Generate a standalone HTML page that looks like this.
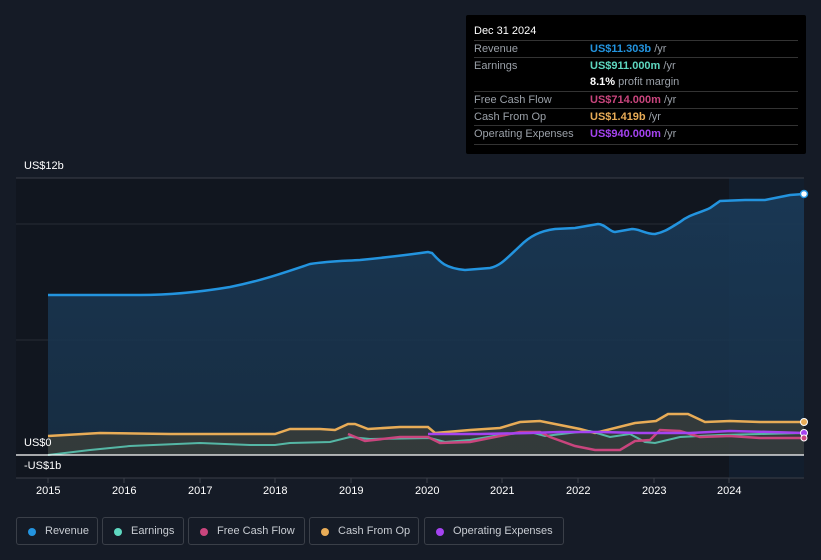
<!DOCTYPE html>
<html><head><meta charset="utf-8"><style>
body{margin:0;width:821px;height:560px;background:#151b26;font-family:"Liberation Sans",sans-serif;overflow:hidden;position:relative}
.tt{position:absolute;left:466px;top:15px;width:340px;height:139px;background:#000;border-radius:2px;font-size:11px;color:#9aa0a8}
.tt .h{position:absolute;left:8px;top:10px;color:#fff;font-size:11px}
.row{position:absolute;left:8px;width:324px;border-top:1px solid #333;height:17px;line-height:17px}
.row span.l{position:absolute;left:0}
.row span.v{position:absolute;left:116px}
.row b{font-weight:bold}
.leg{position:absolute;top:517px;height:28px;border:1px solid #3a3f48;border-radius:3px;color:#c8ccd2;font-size:11px;line-height:27px;box-sizing:border-box;padding-left:28px}
.leg i{position:absolute;left:11px;top:10px;width:8px;height:8px;border-radius:50%}
.ax{position:absolute;color:#fff;font-size:11px}
</style></head><body>
<svg width="821" height="560" style="position:absolute;left:0;top:0">
<defs><linearGradient id="rg" x1="0" y1="0" x2="0" y2="1"><stop offset="0" stop-color="#1a3a58" stop-opacity=".9"/><stop offset="1" stop-color="#18324a" stop-opacity=".8"/></linearGradient></defs>
<rect x="16" y="178" width="788" height="300" fill="#11161f"/>
<rect x="729" y="178" width="75" height="300" fill="#13283d" opacity=".45"/>
<line x1="16" y1="178" x2="804" y2="178" stroke="#3a3f48"/>
<line x1="16" y1="224" x2="804" y2="224" stroke="#262c36"/>
<line x1="16" y1="340" x2="804" y2="340" stroke="#262c36"/>
<path d="M48,295 L140,295 C170,295 200,292 230,287 C260,281 280,274 310,264 C330,261 345,261 360,260 C380,258 400,256 428,252 L432,253 C440,262 445,268 465,270 L490,268 C500,266 505,260 520,246 C530,236 540,231 555,229 L575,228 L598,224 C605,224 610,232 615,232 L632,229 C640,229 645,234 655,234 C665,232 670,228 680,222 C690,214 700,213 710,208 L720,201 L745,200 L765,200 L790,195 L804,194 L804,455 L48,455 Z" fill="url(#rg)"/>
<path d="M48,295 L140,295 C170,295 200,292 230,287 C260,281 280,274 310,264 C330,261 345,261 360,260 C380,258 400,256 428,252 L432,253 C440,262 445,268 465,270 L490,268 C500,266 505,260 520,246 C530,236 540,231 555,229 L575,228 L598,224 C605,224 610,232 615,232 L632,229 C640,229 645,234 655,234 C665,232 670,228 680,222 C690,214 700,213 710,208 L720,201 L745,200 L765,200 L790,195 L804,194" fill="none" stroke="#2394df" stroke-width="2.5"/>
<path d="M48,436 L100,433 L170,434 L275,434 L290,429 L320,429 L335,430 L348,424 L355,424 L368,429 L400,427 L428,427 L435,433 L470,430 L500,428 L520,422 L540,421 L560,425 L580,429 L595,433 L635,423 L656,421 L668,414 L688,414 L705,422 L730,421 L760,422 L804,422 L804,455 L48,455 Z" fill="#4a4634" opacity=".55"/>
<path d="M48,436 L100,433 L170,434 L275,434 L290,429 L320,429 L335,430 L348,424 L355,424 L368,429 L400,427 L428,427 L435,433 L470,430 L500,428 L520,422 L540,421 L560,425 L580,429 L595,433 L635,423 L656,421 L668,414 L688,414 L705,422 L730,421 L760,422 L804,422" fill="none" stroke="#e8ac57" stroke-width="2.5"/>
<path d="M48,455 L90,450 L130,446 L200,443 L250,445 L275,445 L290,443 L330,442 L350,437 L370,439 L430,438 L445,442 L470,440 L500,435 L530,432 L545,436 L570,433 L590,431 L610,437 L630,434 L645,442 L655,443 L680,437 L720,435 L760,434 L804,433" fill="none" stroke="#5ed7c0" stroke-width="2" opacity=".8"/>
<path d="M348,434 L365,441 L400,437 L428,437 L440,443 L470,442 L500,436 L520,432 L540,432 L550,437 L575,446 L595,450 L620,450 L635,441 L650,440 L660,430 L680,431 L700,437 L730,436 L760,438 L804,438" fill="none" stroke="#c9457d" stroke-width="2.5"/>
<path d="M428,434 L480,434 L530,433 L560,432 L600,432 L640,433 L690,433 L730,431 L770,432 L804,433" fill="none" stroke="#a443f0" stroke-width="2.5"/>
<line x1="16" y1="455" x2="804" y2="455" stroke="#fff" stroke-width="1.2"/>
<line x1="16" y1="478" x2="804" y2="478" stroke="#3a3f48"/>
<g stroke="#3a3f48"><line x1="48" y1="478" x2="48" y2="483"/><line x1="124" y1="478" x2="124" y2="483"/><line x1="200" y1="478" x2="200" y2="483"/><line x1="275" y1="478" x2="275" y2="483"/><line x1="351" y1="478" x2="351" y2="483"/><line x1="427" y1="478" x2="427" y2="483"/><line x1="502" y1="478" x2="502" y2="483"/><line x1="578" y1="478" x2="578" y2="483"/><line x1="654" y1="478" x2="654" y2="483"/><line x1="729" y1="478" x2="729" y2="483"/></g>
<circle cx="804" cy="194" r="3.5" fill="#fff" stroke="#2394df" stroke-width="1.5"/>
<circle cx="804" cy="422" r="3.5" fill="#e8ac57" stroke="#fff" stroke-width="1"/>
<circle cx="804" cy="433" r="3.5" fill="#a443f0" stroke="#fff" stroke-width="1"/>
<circle cx="804" cy="438" r="3" fill="#c9457d" stroke="#fff" stroke-width="1"/>
</svg>
<div class="ax" style="left:24px;top:160px">US$12b</div>
<div class="ax" style="left:24px;top:437px">US$0</div>
<div class="ax" style="left:24px;top:460px">-US$1b</div>
<div class="ax" style="left:36px;top:485px">2015</div>
<div class="ax" style="left:112px;top:485px">2016</div>
<div class="ax" style="left:188px;top:485px">2017</div>
<div class="ax" style="left:263px;top:485px">2018</div>
<div class="ax" style="left:339px;top:485px">2019</div>
<div class="ax" style="left:415px;top:485px">2020</div>
<div class="ax" style="left:490px;top:485px">2021</div>
<div class="ax" style="left:566px;top:485px">2022</div>
<div class="ax" style="left:642px;top:485px">2023</div>
<div class="ax" style="left:717px;top:485px">2024</div>
<div class="tt">
<div class="h">Dec 31 2024</div>
<div class="row" style="top:25px"><span class="l">Revenue</span><span class="v"><b style="color:#2394df">US$11.303b</b> /yr</span></div>
<div class="row" style="top:42px"><span class="l">Earnings</span><span class="v"><b style="color:#5ed7c0">US$911.000m</b> /yr</span></div>
<div class="row" style="top:59px;border-top:none"><span class="v"><b style="color:#fff">8.1%</b> profit margin</span></div>
<div class="row" style="top:76px"><span class="l">Free Cash Flow</span><span class="v"><b style="color:#c9457d">US$714.000m</b> /yr</span></div>
<div class="row" style="top:93px"><span class="l">Cash From Op</span><span class="v"><b style="color:#e8ac57">US$1.419b</b> /yr</span></div>
<div class="row" style="top:110px"><span class="l">Operating Expenses</span><span class="v"><b style="color:#a443f0">US$940.000m</b> /yr</span></div>
<div class="row" style="top:129px;height:0"></div>
</div>
<div class="leg" style="left:16px;width:82px"><i style="background:#2394df"></i>Revenue</div>
<div class="leg" style="left:102px;width:82px"><i style="background:#5ed7c0"></i>Earnings</div>
<div class="leg" style="left:188px;width:117px"><i style="background:#c9457d"></i>Free Cash Flow</div>
<div class="leg" style="left:309px;width:110px"><i style="background:#e8ac57"></i>Cash From Op</div>
<div class="leg" style="left:424px;width:140px"><i style="background:#a443f0"></i>Operating Expenses</div>
</body></html>
